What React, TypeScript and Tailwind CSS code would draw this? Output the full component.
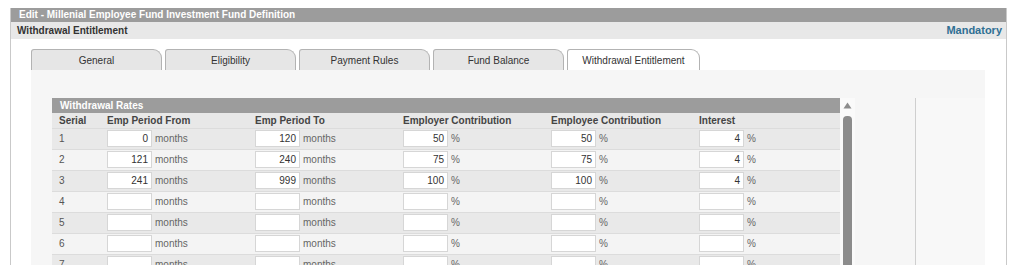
import React from 'react';

type RateRow = {
  serial: number;
  from: string;
  to: string;
  employer: string;
  employee: string;
  interest: string;
};

const rows: RateRow[] = [
  { serial: 1, from: '0', to: '120', employer: '50', employee: '50', interest: '4' },
  { serial: 2, from: '121', to: '240', employer: '75', employee: '75', interest: '4' },
  { serial: 3, from: '241', to: '999', employer: '100', employee: '100', interest: '4' },
  { serial: 4, from: '', to: '', employer: '', employee: '', interest: '' },
  { serial: 5, from: '', to: '', employer: '', employee: '', interest: '' },
  { serial: 6, from: '', to: '', employer: '', employee: '', interest: '' },
  { serial: 7, from: '', to: '', employer: '', employee: '', interest: '' },
];

const tabs = ['General', 'Eligibility', 'Payment Rules', 'Fund Balance', 'Withdrawal Entitlement'];

const Field: React.FC<{ value: string; unit: string; last?: boolean }> = ({ value, unit, last }) => (
  <div className={`${last ? 'flex-1' : 'w-[148px] shrink-0'} flex items-center`}>
    <div className="w-[45px] h-[17px] bg-white border border-[#d6d6d6] text-right pr-[3px] leading-[15px] text-[#333]">
      {value}
    </div>
    <span className="ml-[3px] text-[#666]">{unit}</span>
  </div>
);

const App: React.FC = () => {
  return (
    <div className="w-[1024px] h-[265px] overflow-hidden bg-white pt-[8px] text-[10px] font-['Liberation_Sans',Arial,sans-serif]">
      <div className="ml-[10px] w-[997px] h-[257px] border-x border-[#c9c9c9] flex flex-col">
        <div className="h-[14px] bg-[#9c9c9c] text-white font-bold px-[8px] leading-[14px]">
          Edit - Millenial Employee Fund Investment Fund Definition
        </div>
        <div className="h-[17px] bg-[#e8e8e8] flex justify-between items-center px-[6px] pr-[4px] font-bold">
          <span className="text-[#333]">Withdrawal Entitlement</span>
          <span className="text-[#2f6f93] text-[11px]">Mandatory</span>
        </div>

        <div className="flex gap-[3px] pl-[20px] pt-[10px]">
          {tabs.map((tab, i) => {
            const active = i === tabs.length - 1;
            return (
              <div
                key={tab}
                className={`h-[21px] ${active ? 'w-[133px] bg-white' : 'w-[131px] bg-[#e6e6e6]'} border border-b-0 border-[#b3b3b3] rounded-tl-[3px] rounded-tr-[9px] flex items-center justify-center pt-[1px] text-[#333]`}
              >
                {tab}
              </div>
            );
          })}
        </div>

        <div className="ml-[20px] w-[954px] flex-1 bg-[#f6f6f6] flex pt-[28px] pl-[21px]">
          <div className="w-[788px] shrink-0 flex flex-col">
            <div className="h-[15px] bg-[#9c9c9c] text-white font-bold pl-[8px] leading-[15px]">Withdrawal Rates</div>
            <div className="h-[15px] bg-[#e8e8e8] flex items-center font-bold text-[#444]">
              <div className="w-[55px] shrink-0 pl-[7px]">Serial</div>
              <div className="w-[148px] shrink-0">Emp Period From</div>
              <div className="w-[148px] shrink-0">Emp Period To</div>
              <div className="w-[148px] shrink-0">Employer Contribution</div>
              <div className="w-[148px] shrink-0">Employee Contribution</div>
              <div className="flex-1">Interest</div>
            </div>
            {rows.map((row) => (
              <div
                key={row.serial}
                className={`h-[21px] flex items-center border-t border-[#dcdcdc] ${row.serial % 2 === 1 ? 'bg-[#e9e9e9]' : 'bg-[#f4f4f4]'}`}
              >
                <div className="w-[55px] shrink-0 pl-[7px] text-[#555]">{row.serial}</div>
                <Field value={row.from} unit="months" />
                <Field value={row.to} unit="months" />
                <Field value={row.employer} unit="%" />
                <Field value={row.employee} unit="%" />
                <Field value={row.interest} unit="%" last />
              </div>
            ))}
          </div>

          <div className="w-[15px] shrink-0 bg-[#fafafa] flex flex-col items-center pt-[4px]">
            <svg width="9" height="7" viewBox="0 0 9 7">
              <path d="M4.5 0.5 L8.5 6.5 L0.5 6.5 Z" fill="#8c8c8c" />
            </svg>
            <div className="mt-[7px] w-[9px] flex-1 bg-[#8c8c8c] rounded-t-[4px]" />
          </div>

          <div className="w-[60px] shrink-0" />
          <div className="flex-1 border-l border-[#cfcfcf] bg-[#f8f8f8]" />
        </div>
      </div>
    </div>
  );
};

export default App;
